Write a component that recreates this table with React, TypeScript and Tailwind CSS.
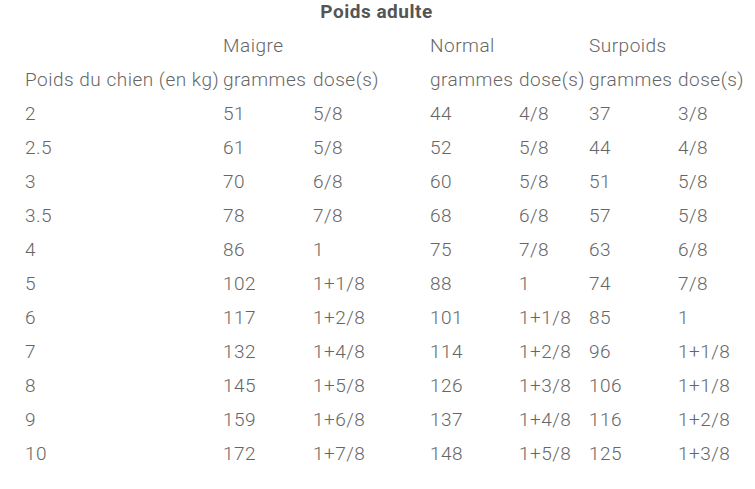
const rows: [string, string, string, string, string, string, string][] = [
  ['2', '51', '5/8', '44', '4/8', '37', '3/8'],
  ['2.5', '61', '5/8', '52', '5/8', '44', '4/8'],
  ['3', '70', '6/8', '60', '5/8', '51', '5/8'],
  ['3.5', '78', '7/8', '68', '6/8', '57', '5/8'],
  ['4', '86', '1', '75', '7/8', '63', '6/8'],
  ['5', '102', '1+1/8', '88', '1', '74', '7/8'],
  ['6', '117', '1+2/8', '101', '1+1/8', '85', '1'],
  ['7', '132', '1+4/8', '114', '1+2/8', '96', '1+1/8'],
  ['8', '145', '1+5/8', '126', '1+3/8', '106', '1+1/8'],
  ['9', '159', '1+6/8', '137', '1+4/8', '116', '1+2/8'],
  ['10', '172', '1+7/8', '148', '1+5/8', '125', '1+3/8'],
];

const cols = 'grid grid-cols-[198px_90px_117px_89px_70px_89px_1fr] items-center h-[34px] whitespace-nowrap';

export default function App() {
  return (
    <div className="w-[755px] h-[489px] bg-white pl-[25px] text-[19px] tracking-[0.5px] text-[#666] font-['Roboto',sans-serif] font-light">
      <div className="h-[29px] pb-[4px] flex items-center justify-center pr-[27px] font-bold text-[#555]">
        Poids adulte
      </div>
      <div className={cols}>
        <div />
        <div>Maigre</div>
        <div />
        <div>Normal</div>
        <div />
        <div>Surpoids</div>
        <div />
      </div>
      <div className={cols}>
        <div>Poids du chien (en kg)</div>
        <div>grammes</div>
        <div>dose(s)</div>
        <div>grammes</div>
        <div>dose(s)</div>
        <div>grammes</div>
        <div>dose(s)</div>
      </div>
      {rows.map((r) => (
        <div key={r[0]} className={cols}>
          {r.map((c, i) => (
            <div key={i}>{c}</div>
          ))}
        </div>
      ))}
    </div>
  );
}
